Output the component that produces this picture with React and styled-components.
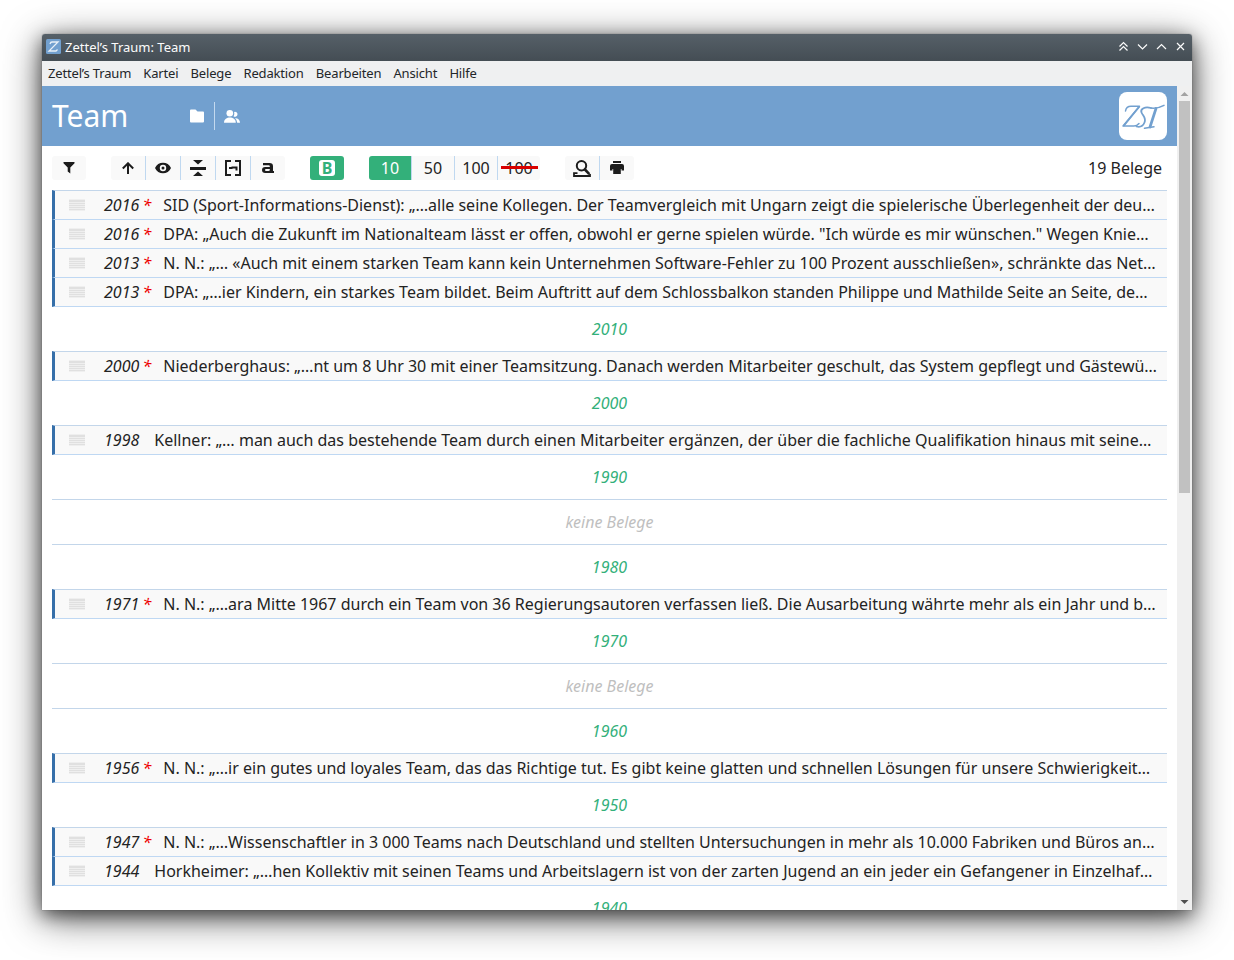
import React from 'react';
import styled, { createGlobalStyle, css } from 'styled-components';

const Global = createGlobalStyle`
  * { box-sizing: border-box; }
  html, body { margin: 0; padding: 0; background: #fff; }
  body { font-family: "Noto Sans", sans-serif; color: #232323; overflow: hidden; }
`;

const Desktop = styled.div`
  height: 960px;
  padding: 34px 42px 50px;
`;
const Window = styled.div`
  height: 876px;
  display: flex;
  flex-direction: column;
  background: #fff;
  border-radius: 3px 3px 0 0;
  box-shadow: 0 0 1px rgba(0,0,0,.6), 0 8px 38px rgba(0,0,0,.62), 0 5px 17px rgba(0,0,0,.5);
`;
const TitleBar = styled.div`
  height: 27px;
  flex: none;
  display: flex;
  align-items: center;
  gap: 4px;
  padding: 0 6px 2px 4px;
  border-radius: 3px 3px 0 0;
  background: linear-gradient(#566068, #444d54);
  color: #fcfcfc;
  font-size: 13px;
`;
const TitleText = styled.span`
  flex: 1;
`;
const Controls = styled.div`
  display: flex;
  gap: 8px;
  svg { display: block; }
`;
const MenuBar = styled.div`
  height: 25px;
  flex: none;
  display: flex;
  align-items: center;
  gap: 12.2px;
  padding: 0 6px 2px;
  background: #eff0f1;
  color: #232629;
  font-size: 13px;
  letter-spacing: -.17px;
`;
const Body = styled.div`
  flex: 1;
  min-height: 0;
  display: flex;
`;
const Page = styled.main`
  flex: 1;
  min-width: 0;
  overflow: hidden;
`;
const Header = styled.header`
  height: 60px;
  display: flex;
  align-items: center;
  padding: 0 10px;
  background: #72a0cf;
  color: #fff;
`;
const Title = styled.h1`
  margin: 0;
  width: 128px;
  font-size: 30px;
  font-weight: 400;
  line-height: 60px;
`;
const HeaderButton = styled.span`
  width: 34px;
  height: 28px;
  display: flex;
  align-items: center;
  justify-content: center;
  & + & { border-left: 1px solid #c3d9ef; width: 35px; }
`;
const Logo = styled.div`
  width: 48px;
  height: 48px;
  margin-left: auto;
  border-radius: 8px;
  background: #fff;
`;
const Toolbar = styled.div`
  height: 44px;
  display: flex;
  align-items: center;
  gap: 25px;
  padding: 0 15px 0 10px;
`;
const Group = styled.div`
  height: 24px;
  display: flex;
  border-radius: 3px;
  overflow: hidden;
  background: #f9f9f9;
`;
const Tool = styled.div`
  width: ${p => (p.$wide ? 42 : 34)}px;
  height: 24px;
  box-sizing: content-box;
  display: flex;
  align-items: center;
  justify-content: center;
  font-size: 16px;
  line-height: 24px;
  & + & { border-left: 1px solid #bfd8f0; }
  ${p => p.$active && css`background: #33b07a; color: #fff;`}
`;
const Badge = styled.b`
  width: 16px;
  height: 16px;
  border-radius: 3px;
  background: #fff;
  color: #33b07a;
  font-size: 16px;
  line-height: 16px;
  text-align: center;
`;
const Unlimited = styled.span`
  display: grid;
  place-items: center;
  &::before, &::after { grid-area: 1 / 1; }
  &::before { content: "100"; }
  &::after { content: ""; width: 37px; height: 3px; margin-top: -1px; background: #d90000; }
`;
const Count = styled.span`
  margin-left: auto;
  font-size: 16px;
`;
const List = styled.div`
  margin: 0 10px;
  border-top: 1px solid #c3d6ea;
`;
const Row = styled.div`
  height: 29px;
  display: flex;
  align-items: center;
  margin-top: ${p => (p.$first ? -1 : 0)}px;
  border-top: ${p => (p.$first ? '1px solid #c3d6ea' : '0')};
  ${p => p.$first && css`height: 30px;`}
  border-left: 3px solid #366fa9;
  border-bottom: 1px solid #bfd8f3;
  background: #f9f9f9;
  font-size: 16px;
  line-height: 28px;
  padding: 0 10px 0 14px;
  white-space: nowrap;
`;
const Handle = styled.svg`
  flex: none;
  width: 16px;
  height: 12px;
  margin-right: 19px;
`;
const Year = styled.em`
  flex: none;
  width: 35.3px;
`;
const Star = styled.em`
  flex: none;
  width: 9px;
  padding-left: 3.3px;
  color: #ee0000;
`;
const Snippet = styled.span`
  margin-left: 15px;
`;
const Decade = styled.div`
  height: 45px;
  border-bottom: 1px solid #c3d6ea;
  line-height: 44px;
  text-align: center;
  font-size: 16px;
  font-style: italic;
  color: ${p => (p.$empty ? '#bfbfbf' : '#33b07a')};
`;
const Scrollbar = styled.div`
  width: 15px;
  flex: none;
  display: flex;
  flex-direction: column;
  align-items: center;
  background: #f0f0f0;
`;
const Thumb = styled.div`
  width: 11px;
  height: 392px;
  margin-bottom: auto;
  background: #c1c1c1;
`;
const Arrow = styled.svg`
  width: 15px;
  height: 15px;
  display: block;
`;

const Icon = ({ children, color = '#1c1c1c', w, h }) => (
  <svg width={w} height={h} viewBox={`0 0 ${w} ${h}`} fill={color}>{children}</svg>
);

const monogram = (
  <g fill="none" strokeLinecap="round" strokeLinejoin="round">
    <path d="M6.500 19C7 16 9 14.300 12 14.300H20.500L4 34H15Q18 34 20 31.500" strokeWidth="1.500" />
    <path d="M20 15L5 33.500" strokeWidth="1.900" />
    <path d="M32 16C26 14 21 17 22.500 20.500C24 24 27.500 26 25.500 30.500C24 34 21 35.500 17.500 34.500" strokeWidth="1.800" />
    <path d="M32 16C36 16.500 40 16 45 13.300M25.500 36.300L35 34.800" strokeWidth="1.500" />
    <path d="M37 16.500L31 35" strokeWidth="2.700" />
  </g>
);

const rows = [
  ['2016', 1, 'SID (Sport-Informations-Dienst): „…alle seine Kollegen. Der Teamvergleich mit Ungarn zeigt die spielerische Überlegenheit der deu…'],
  ['2016', 1, 'DPA: „Auch die Zukunft im Nationalteam lässt er offen, obwohl er gerne spielen würde. "Ich würde es mir wünschen." Wegen Knie…'],
  ['2013', 1, 'N. N.: „… «Auch mit einem starken Team kann kein Unternehmen Software-Fehler zu 100 Prozent ausschließen», schränkte das Net…'],
  ['2013', 1, 'DPA: „…ier Kindern, ein starkes Team bildet. Beim Auftritt auf dem Schlossbalkon standen Philippe und Mathilde Seite an Seite, de…'],
  '2010',
  ['2000', 1, 'Niederberghaus: „…nt um 8 Uhr 30 mit einer Teamsitzung. Danach werden Mitarbeiter geschult, das System gepflegt und Gästewü…'],
  '2000',
  ['1998', 0, 'Kellner: „… man auch das bestehende Team durch einen Mitarbeiter ergänzen, der über die fachliche Qualifikation hinaus mit seine…'],
  '1990',
  null,
  '1980',
  ['1971', 1, 'N. N.: „…ara Mitte 1967 durch ein Team von 36 Regierungsautoren verfassen ließ. Die Ausarbeitung währte mehr als ein Jahr und b…'],
  '1970',
  null,
  '1960',
  ['1956', 1, 'N. N.: „…ir ein gutes und loyales Team, das das Richtige tut. Es gibt keine glatten und schnellen Lösungen für unsere Schwierigkeit…'],
  '1950',
  ['1947', 1, 'N. N.: „…Wissenschaftler in 3 000 Teams nach Deutschland und stellten Untersuchungen in mehr als 10.000 Fabriken und Büros an…'],
  ['1944', 0, 'Horkheimer: „…hen Kollektiv mit seinen Teams und Arbeitslagern ist von der zarten Jugend an ein jeder ein Gefangener in Einzelhaf…'],
  '1940',
];

const menus = ['Zettel’s Traum', 'Kartei', 'Belege', 'Redaktion', 'Bearbeiten', 'Ansicht', 'Hilfe'];
const controls = ['M2 6L6 2L10 6M2 10L6 6L10 10', 'M1.500 4L6 8.500L10.500 4', 'M1.500 8.500L6 4L10.500 8.500', 'M2.500 2.500L9.500 9.500M9.500 2.500L2.500 9.500'];

export default function App() {
  return (
    <Desktop>
      <Global />
      <Window>
        <TitleBar>
          <svg width="15" height="15" viewBox="0 0 15 15">
            <rect width="15" height="15" rx="1.500" fill="#72a0cf" />
            <path d="M4 5C4.500 3 5 3 6 3H12L3 12H10L11.500 10.500" fill="none" stroke="#e8f0f8" strokeWidth="1.300" />
          </svg>
          <TitleText>Zettel’s Traum: Team</TitleText>
          <Controls>
            {controls.map(d => (
              <svg key={d} width="11" height="11" viewBox="0.5 0.5 11 11" fill="none" stroke="#fcfcfc" strokeWidth="1.200"><path d={d} /></svg>
            ))}
          </Controls>
        </TitleBar>
        <MenuBar>{menus.map(m => <span key={m}>{m}</span>)}</MenuBar>
        <Body>
          <Page>
            <Header>
              <Title>Team</Title>
              <HeaderButton>
                <Icon w={14} h={14} color="#fff"><path d="M0 1.500Q0 .5 1 .5H5.500L7.500 2.500H13Q14 2.500 14 3.500V12.500Q14 13.500 13 13.500H1Q0 13.500 0 12.500Z" /></Icon>
              </HeaderButton>
              <HeaderButton>
                <Icon w={16} h={14} color="#fff">
                  <circle cx="5.800" cy="4.200" r="3.300" />
                  <path d="M0 13.700C0 10.300 3 8.600 5.900 8.600S11.800 10.300 11.800 13.700Z" />
                  <path d="M10.100 3A2.500 2.500 0 1 1 9.600 7.400Q10.900 5.300 10.100 3ZM11 9.200C14 9 16 11 16 13.700H13.200Q13.200 11 11 9.200Z" />
                </Icon>
              </HeaderButton>
              <Logo>
                <svg width="48" height="48" viewBox="0 0 48 48" stroke="#72a0cf">{monogram}</svg>
              </Logo>
            </Header>
            <Toolbar>
              <Group><Tool><Icon w={12} h={12}><path d="M.5 0H11.500V1.300L7.300 5.500V11.500L4.700 9.500V5.500L.5 1.300Z" /></Icon></Tool></Group>
              <Group>
                <Tool><Icon w={12} h={12}><path d="M6 12V1.500M.8 6.500L6 1.300L11.200 6.500" fill="none" stroke="#1c1c1c" strokeWidth="2" /></Icon></Tool>
                <Tool><Icon w={16} h={12}><path fillRule="evenodd" d="M0 6C1.500 2.500 4.500 .8 8 .8S14.500 2.500 16 6C14.500 9.500 11.500 11.200 8 11.200S1.500 9.500 0 6ZM8 2.800A3.200 3.200 0 1 0 8 9.200A3.200 3.200 0 0 0 8 2.800Z" /><circle cx="8" cy="6" r="1.500" /></Icon></Tool>
                <Tool><Icon w={16} h={16}><path d="M0 7H16V10H0ZM3 0H13L8 4.500ZM3 16H13L8 11.500Z" /></Icon></Tool>
                <Tool><Icon w={16} h={16}><path d="M6 1H1V15H6M10 1H15V15H10" fill="none" stroke="#1c1c1c" strokeWidth="2" /><path d="M4 8H7.500M6.500 7.500H11.500V10.500" fill="none" stroke="#1c1c1c" strokeWidth="2" /></Icon></Tool>
                <Tool><Icon w={12} h={10}><path fillRule="evenodd" d="M1 0H7.500Q11 0 11 3.200V8H12V10H3.200Q0 10 0 7T3.200 4H7.800V3.200Q7.800 2.200 6.800 2.200H1ZM7.800 5.900H4Q3 5.900 3 7T4 8.100H6.500Q7.800 8.100 7.800 7Z" /></Icon></Tool>
              </Group>
              <Group>
                <Tool $active><Badge>B</Badge></Tool>
              </Group>
              <Group>
                <Tool $wide $active>10</Tool>
                <Tool $wide>50</Tool>
                <Tool $wide>100</Tool>
                <Tool $wide><Unlimited /></Tool>
              </Group>
              <Group>
                <Tool>
                  <Icon w={18} h={18}>
                    <path d="M4.500 14.200H1V17H17V15" fill="none" stroke="#1c1c1c" strokeWidth="1.800" />
                    <path d="M11 9.500L16.300 15.200" fill="none" stroke="#1c1c1c" strokeWidth="2.600" />
                    <circle cx="8.500" cy="6.800" r="4.700" fill="none" stroke="#1c1c1c" strokeWidth="2" />
                  </Icon>
                </Tool>
                <Tool><Icon w={14} h={14}><path d="M3 0H11V2H3ZM2 3H12Q14 3 14 5V9.500H11.500V8H2.500V9.500H0V5Q0 3 2 3ZM3.200 8H10.800V13H3.200Z" /></Icon></Tool>
              </Group>
              <Count>19 Belege</Count>
            </Toolbar>
            <List>
              {rows.map((r, i) => {
                if (r === null) return <Decade key={i} $empty>keine Belege</Decade>;
                if (typeof r === 'string') return <Decade key={i}>{r}</Decade>;
                return (
                  <Row key={i} $first={!Array.isArray(rows[i - 1])}>
                    <Handle viewBox="0 0 16 12" fill="#e0e0e0"><path d="M0 1H16V3H0ZM0 4H16V5H0ZM0 6H16V7H0ZM0 8H16V9H0ZM0 10H16V11H0Z" /><path d="M0 0H16V12H0Z" opacity=".4" /></Handle>
                    <Year>{r[0]}</Year>
                    {r[1] ? <Star>*</Star> : null}
                    <Snippet>{r[2]}</Snippet>
                  </Row>
                );
              })}
            </List>
          </Page>
          <Scrollbar>
            <Arrow viewBox="0 0 15 15"><path d="M3.500 10L7.500 6L11.500 10Z" fill="#a3a3a3" /></Arrow>
            <Thumb />
            <Arrow viewBox="0 0 15 15"><path d="M3.500 5L7.500 9L11.500 5Z" fill="#505050" /></Arrow>
          </Scrollbar>
        </Body>
      </Window>
    </Desktop>
  );
}
